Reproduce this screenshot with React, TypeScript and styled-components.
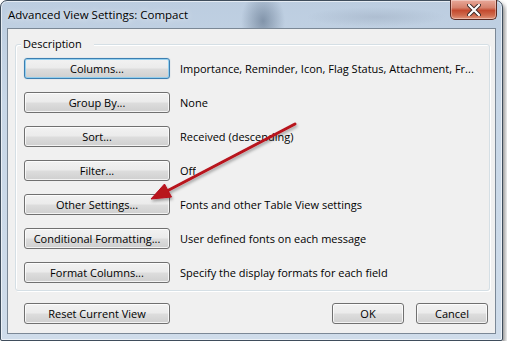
import React from "react";
import styled, { createGlobalStyle, css } from "styled-components";

const GlobalStyle = createGlobalStyle`
  body {
    margin: 0;
    background: #ffffff;
    font-family: "Open Sans", "Noto Sans", sans-serif;
    font-size: 11px;
    color: #000;
  }
`;

const Window = styled.div`
  position: relative;
  box-sizing: border-box;
  width: 503px;
  height: 341px;
  border: 1px solid #3f4d5c;
  border-radius: 7px 7px 2px 2px;
  box-shadow: 2px 3px 4px rgba(0, 0, 0, 0.45), inset 0 0 0 1px rgba(255, 255, 255, 0.6);
  background:
    radial-gradient(ellipse 22px 30px at 262px 20px, rgba(70, 90, 115, 0.5), rgba(70, 90, 115, 0)),
    radial-gradient(ellipse 70px 10px at 375px 16px, rgba(150, 165, 185, 0.4), rgba(150, 165, 185, 0)),
    linear-gradient(180deg, #bccde0 0%, #c8d7e7 30%, #cfdcea 100%);
  display: flex;
  flex-direction: column;
`;

const TitleBar = styled.div`
  height: 27px;
  display: flex;
  align-items: flex-start;
  padding-left: 7px;
`;

const Title = styled.div`
  margin-top: 6px;
  font-size: 11.5px;
  color: #000;
  text-shadow: 0 0 6px rgba(255, 255, 255, 0.9);
`;

const CloseButton = styled.div`
  margin-left: auto;
  margin-right: 5px;
  margin-top: -1px;
  width: 47px;
  height: 20px;
  box-sizing: border-box;
  border: 1px solid #5a2a22;
  border-top: none;
  border-radius: 0 0 5px 5px;
  background: linear-gradient(180deg, #e9a99a 0%, #d6826d 40%, #c44a2f 55%, #cf6a4d 80%, #e2957c 100%);
  box-shadow: inset 0 0 0 1px rgba(255, 255, 255, 0.35);
  display: flex;
  align-items: center;
  justify-content: center;
`;

const Client = styled.div`
  flex: 1;
  margin: 0 6px 6px;
  border: 1px solid #7b8896;
  background: #f0f0f0;
  display: flex;
  flex-direction: column;
`;

const Group = styled.div`
  position: relative;
  margin: 15px 5px 0 7px;
  padding: 13px 0 7px 8px;
  border: 1px solid #d5dfe5;
  border-radius: 3px;
  box-shadow: inset 1px 1px 0 #ffffff, 1px 1px 0 #ffffff;
  display: flex;
  flex-direction: column;
  gap: 13px;
`;

const GroupLabel = styled.div`
  position: absolute;
  top: -9px;
  left: 5px;
  padding: 0 12px 0 2px;
  background: #f0f0f0;
  font-size: 11px;
  line-height: 16px;
`;

const Row = styled.div`
  display: flex;
  align-items: center;
  gap: 10px;
`;

const Button = styled.button<{ $width?: number; $focused?: boolean }>`
  flex-shrink: 0;
  box-sizing: border-box;
  width: ${(p) => p.$width ?? 146}px;
  height: 21px;
  padding: 0;
  font-family: inherit;
  font-size: 11px;
  color: #000;
  border: 1px solid #707070;
  border-radius: 3px;
  background: linear-gradient(180deg, #f2f2f2 0%, #ebebeb 48%, #dddddd 52%, #cfcfcf 100%);
  box-shadow: inset 0 0 0 1px rgba(255, 255, 255, 0.75);
  ${(p) =>
    p.$focused &&
    css`
      border-color: #3c7fb1;
      box-shadow: inset 0 0 0 1px rgba(140, 205, 240, 0.9), 0 0 1px rgba(60, 127, 177, 0.5);
    `}
`;

const RowText = styled.span`
  font-size: 11px;
  white-space: nowrap;
  overflow: hidden;
`;

const Footer = styled.div`
  margin-top: 12px;
  padding: 0 7px 0 16px;
  display: flex;
  gap: 12px;
`;

const Spacer = styled.div`
  flex: 1;
`;

const ArrowLayer = styled.svg`
  position: absolute;
  left: -1px;
  top: -1px;
  pointer-events: none;
  overflow: visible;
`;

const rows = [
  { label: "Columns...", text: "Importance, Reminder, Icon, Flag Status, Attachment, Fr...", focused: true },
  { label: "Group By...", text: "None" },
  { label: "Sort...", text: "Received (descending)" },
  { label: "Filter...", text: "Off" },
  { label: "Other Settings...", text: "Fonts and other Table View settings" },
  { label: "Conditional Formatting...", text: "User defined fonts on each message" },
  { label: "Format Columns...", text: "Specify the display formats for each field" },
];

export default function App() {
  return (
    <>
      <GlobalStyle />
      <Window>
        <TitleBar>
          <Title>Advanced View Settings: Compact</Title>
          <CloseButton>
            <svg width="14" height="12" viewBox="0 0 14 12">
              <path d="M2 1 L12 11 M12 1 L2 11" stroke="#3a2a28" strokeWidth="4" strokeLinecap="round" />
              <path d="M2 1 L12 11 M12 1 L2 11" stroke="#ffffff" strokeWidth="2.2" strokeLinecap="round" />
            </svg>
          </CloseButton>
        </TitleBar>
        <Client>
          <Group>
            <GroupLabel>Description</GroupLabel>
            {rows.map((r) => (
              <Row key={r.label}>
                <Button $focused={r.focused}>{r.label}</Button>
                <RowText>{r.text}</RowText>
              </Row>
            ))}
          </Group>
          <Footer>
            <Button>Reset Current View</Button>
            <Spacer />
            <Button $width={72}>OK</Button>
            <Button $width={72}>Cancel</Button>
          </Footer>
        </Client>
        <ArrowLayer width="503" height="341" viewBox="0 0 503 341">
          <defs>
            <filter id="arrowShadow" x="-20%" y="-20%" width="140%" height="140%">
              <feDropShadow dx="1" dy="2" stdDeviation="1.5" floodColor="#000" floodOpacity="0.35" />
            </filter>
          </defs>
          <g filter="url(#arrowShadow)" fill="#b8121c" stroke="#b8121c">
            <line x1="295" y1="124" x2="166" y2="191.5" strokeWidth="3" strokeLinecap="round" />
            <polygon points="151,199 171.5,197 164.5,184" strokeWidth="1" strokeLinejoin="round" />
          </g>
        </ArrowLayer>
      </Window>
    </>
  );
}
